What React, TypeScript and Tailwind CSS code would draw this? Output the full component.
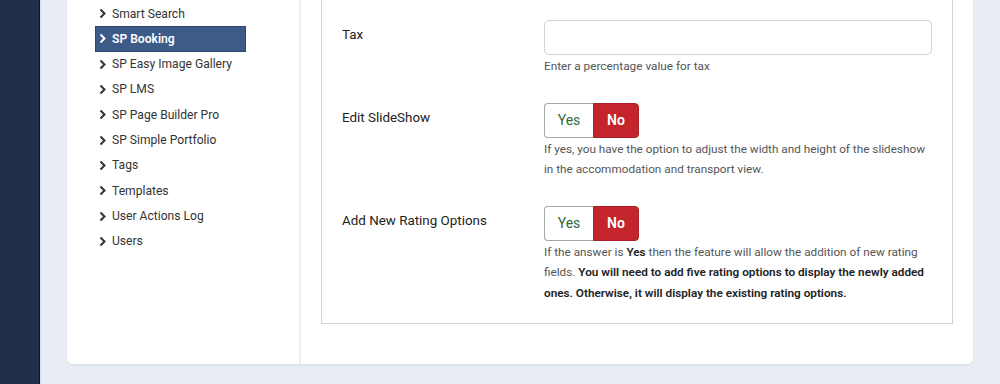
import React from 'react';

const menu = [
    'Smart Search',
    'SP Booking',
    'SP Easy Image Gallery',
    'SP LMS',
    'SP Page Builder Pro',
    'SP Simple Portfolio',
    'Tags',
    'Templates',
    'User Actions Log',
    'Users',
];

function Chevron() {
    return (
        <svg width="8" height="11" viewBox="0 0 8 11" fill="none" className="shrink-0">
            <path d="M1.5 1.5 L5.5 5.5 L1.5 9.5" stroke="currentColor" strokeWidth="2" />
        </svg>
    );
}

function Toggle() {
    return (
        <div className="flex h-[35px] w-[95px] text-[14px]">
            <div className="flex w-[49px] items-center justify-center rounded-l-[4px] border border-r-0 border-[#9fae9f] text-[#2f6a3c]">
                Yes
            </div>
            <div className="flex w-[46px] items-center justify-center rounded-r-[4px] border border-[#ad1f26] bg-[#c4252c] font-semibold text-white">
                No
            </div>
        </div>
    );
}

function Row({ label, children, last }: { label: string; children: React.ReactNode; last?: boolean }) {
    return (
        <div className={`flex ${last ? '' : 'mb-[26px]'}`}>
            <div className="w-[202px] shrink-0 pt-[5px] text-[13.4px] leading-[20px] text-[#222]">{label}</div>
            <div className="flex-1">{children}</div>
        </div>
    );
}

export default function App() {
    return (
        <div className="flex h-[384px] w-[1000px] overflow-hidden bg-[#e9edf6]" style={{ fontFamily: 'Roboto, "Liberation Sans", sans-serif' }}>
            <div className="w-[40px] shrink-0 border-r border-[#0e1626] bg-[#1f2e49]" />
            <div className="w-[2px] shrink-0 bg-[#dde2ee]" />
            <div className="flex-1 pl-[25px] pr-[27px]">
                <div className="flex h-[364px] rounded-b-[5px] bg-white shadow-[0_1px_2px_rgba(0,0,0,0.08)]">
                    <div className="w-[234px] shrink-0 border-r-2 border-[#eceef2] pl-[28px] pt-[1px]">
                        <ul className="w-[151px]">
                            {menu.map((item) => {
                                const active = item === 'SP Booking';
                                return (
                                    <li
                                        key={item}
                                        className={`flex h-[25.3px] items-center gap-[5px] pl-[3px] text-[12.1px] ${
                                            active
                                                ? 'border border-[#2c4670] bg-[#3c5b87] font-semibold text-white'
                                                : 'border border-transparent text-[#333]'
                                        }`}
                                    >
                                        <Chevron />
                                        <span>{item}</span>
                                    </li>
                                );
                            })}
                        </ul>
                    </div>
                    <div className="flex-1 px-[20px]">
                        <div className="border-x border-b border-[#cfd4dc] pb-[20px] pl-[20px] pr-[20px] pt-[20px]">
                            <Row label="Tax">
                                <div className="h-[35px] rounded-[5px] border border-[#cdd2d9] bg-white" />
                                <p className="pt-[1px] text-[11.8px] leading-[20.5px] text-[#555]">Enter a percentage value for tax</p>
                            </Row>
                            <Row label="Edit SlideShow">
                                <Toggle />
                                <p className="whitespace-nowrap pt-[1px] text-[11.75px] leading-[20.5px] text-[#555]">
                                    If yes, you have the option to adjust the width and height of the slideshow
                                    <br />
                                    in the accommodation and transport view.
                                </p>
                            </Row>
                            <Row label="Add New Rating Options" last>
                                <Toggle />
                                <p className="whitespace-nowrap pt-[1px] text-[11.75px] leading-[20.5px] text-[#555]">
                                    If the answer is <b className="font-semibold text-[#222]">Yes</b> then the feature will allow the addition of new rating
                                    <br />
                                    fields.{' '}
                                    <b className="font-semibold text-[#222]">
                                        You will need to add five rating options to display the newly added
                                        <br />
                                        ones. Otherwise, it will display the existing rating options.
                                    </b>
                                </p>
                            </Row>
                        </div>
                    </div>
                </div>
            </div>
        </div>
    );
}
